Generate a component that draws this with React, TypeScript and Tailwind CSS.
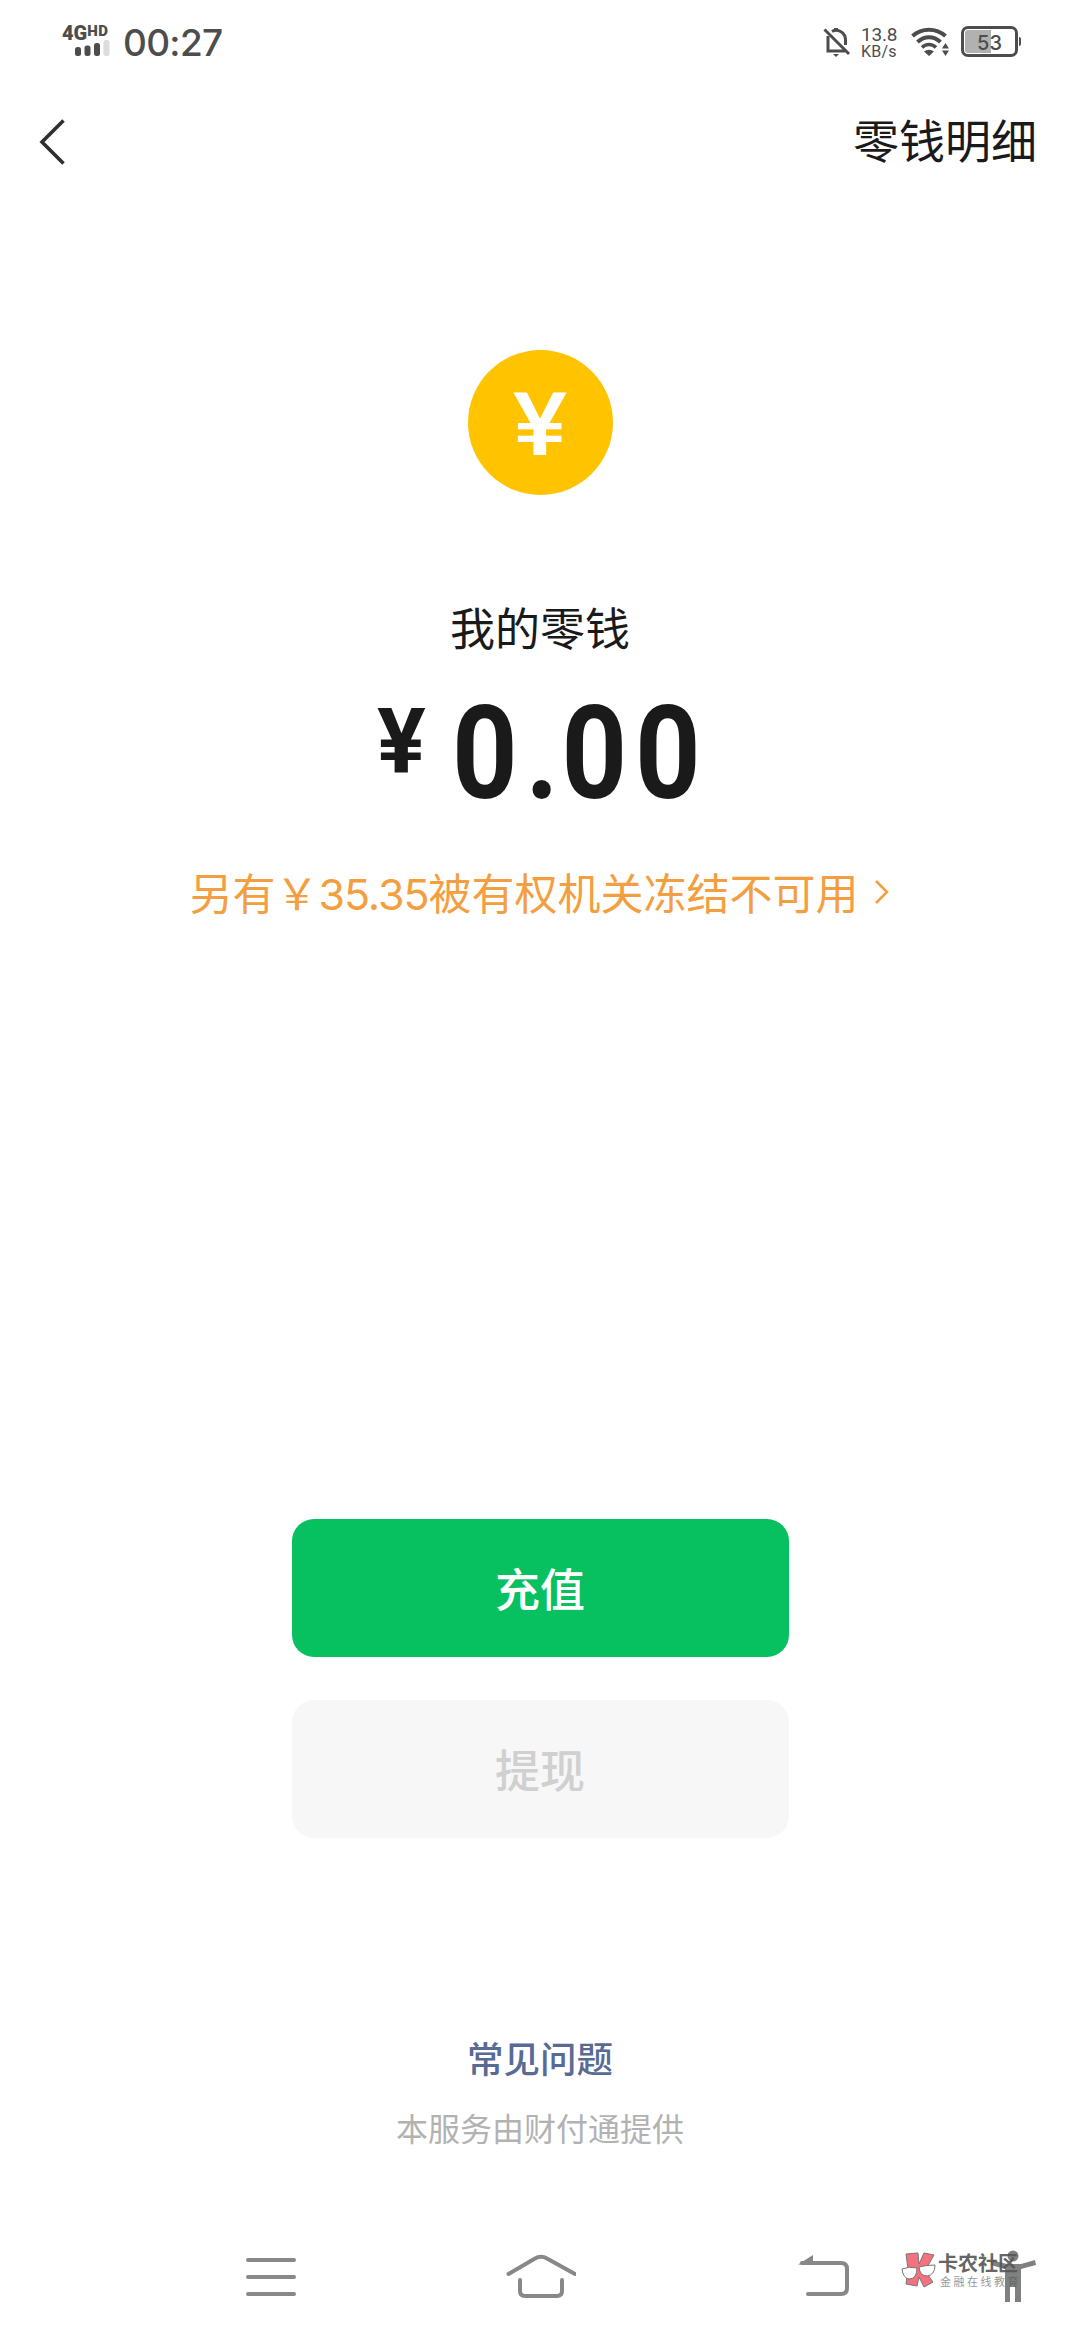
import type { ReactNode } from "react";

function StatusBar() {
  return (
    <div className="flex h-[84px] items-start justify-between pl-[62px] pr-[59px] font-[Roboto,'Noto_Sans_CJK_SC',sans-serif] text-[#4d4d4d]">
      <div className="flex">
        <div className="flex w-[61px] flex-col pt-[25px]">
          <div className="flex h-[15px] items-start font-black">
            <span className="text-[20px] leading-[17px]">4G</span>
            <span className="text-[15px] leading-[12px] tracking-[0.5px]">HD</span>
          </div>
          <svg className="ml-[12px] h-[18px] w-[38px]" viewBox="0 0 38 18" fill="currentColor">
            <rect x="1" y="7" width="6" height="9" rx="2.5" />
            <rect x="10.500" y="5.500" width="6" height="10.500" rx="2.500" />
            <rect x="20" y="3" width="6" height="13" rx="2.5" />
            <rect x="29.500" y="0" width="6" height="16" rx="2.500" fill="#dcdcdc" />
          </svg>
        </div>
        <span className="pt-[20px] font-[Inter,sans-serif] text-[37px] leading-[45px] font-medium tracking-[-0.7px]">
          00:27
        </span>
      </div>

      <div className="flex items-start pt-[26px]">
        <svg className="h-[32px] w-[28px]" viewBox="0 0 28 32" fill="none" stroke="currentColor" strokeWidth="3">
          <path d="M5 10V25H22" />
          <path d="M9 5.500C15 2 22.500 7 22.500 14V19" />
          <path d="M1.500 3.500L26 28" />
          <path d="M10 28H16L13 31Z" fill="currentColor" stroke="none" />
          <path d="M11 3.500H15" />
        </svg>
        <div className="ml-[10px] flex w-[36px] flex-col">
          <span className="text-[19px] leading-[17px] tracking-[-0.2px]">13.8</span>
          <span className="pt-[1px] text-[16px] leading-[15px] tracking-[0.2px]">KB/s</span>
        </div>
        <svg className="ml-[14px] h-[32px] w-[40px]" viewBox="0 0 40 32" fill="none" stroke="currentColor" strokeWidth="4">
          <path d="M1.500 10C11 1.500 25 1.500 34.500 10" />
          <path d="M6.500 16C13.500 9.500 22.500 9.500 29.500 16" />
          <path d="M11 21.500C15 17.500 21 17.500 25 21.500" strokeWidth="3.500" />
          <path d="M13 25.500Q18 22 23 25.500L18 30Z" fill="currentColor" stroke="none" />
          <path d="M34.500 17L38 22.500H31ZM34.500 30L38 24.500H31Z" fill="currentColor" stroke="none" />
        </svg>
        <div className="ml-[10px] flex items-center">
          <div className="relative flex h-[31px] w-[57px] items-center justify-center rounded-[7px] border-[3px] border-[#4d4d4d]">
            <div className="absolute top-[1px] left-[1px] h-[23px] w-[26px] rounded-l-[3px] bg-[#b1b1b1]" />
            <span className="relative top-px font-[Inter,sans-serif] text-[20px] leading-[22px] font-medium">53</span>
          </div>
          <div className="ml-px h-[9px] w-[2px] rounded-r-sm bg-[#4d4d4d]" />
        </div>
      </div>
    </div>
  );
}

function Header() {
  return (
    <header className="flex h-[115px] items-center justify-between pl-[38px] pr-[43px]">
      <svg className="h-[48px] w-[28px]" viewBox="0 0 28 48" fill="none" stroke="#2e2e2e" strokeWidth="3.600">
        <path d="M25.500 2.500L4 24L25.500 45.500" />
      </svg>
      <span className="pb-[7px] text-[46px] leading-[56px]">零钱明细</span>
    </header>
  );
}

function ActionButton({ children, disabled = false }: { children: ReactNode; disabled?: boolean }) {
  return (
    <button
      disabled={disabled}
      className={`flex h-[138px] w-[497px] items-center justify-center rounded-[22px] text-[45px] font-medium ${
        disabled ? "bg-[#f7f7f7] text-[#d0d0d0]" : "bg-[#07c160] text-white"
      }`}
    >
      {children}
    </button>
  );
}

function NavBar() {
  return (
    <nav className="flex h-[126px] items-center pl-[246px] text-[#888]">
      <svg className="h-[48px] w-[50px]" viewBox="0 0 50 48" fill="none" stroke="currentColor" strokeWidth="4" strokeLinecap="round">
        <path d="M2 7H48M2 24H48M2 41H48" />
      </svg>
      <svg className="ml-[210px] h-[48px] w-[70px]" viewBox="0 0 70 48" fill="none" stroke="currentColor" strokeWidth="4" strokeLinecap="round">
        <path d="M2.500 21L29 5.500Q35 2 41 5.500L69 21" />
        <path d="M14 27V38Q14 43 19 43H51Q56 43 56 38V27" />
      </svg>
      <svg className="ml-[222px] h-[48px] w-[52px]" viewBox="0 0 52 48" fill="none" stroke="currentColor" strokeWidth="4">
        <path d="M4 10H43Q49 10 49 16V35Q49 41 43 41H10" strokeLinecap="round" />
        <path d="M0 11.500L15 2V12Z" fill="currentColor" stroke="none" />
      </svg>
    </nav>
  );
}

function Watermark() {
  return (
    <div className="absolute top-[2248px] left-[900px] flex">
      <svg className="h-[44px] w-[38px]" viewBox="0 0 38 44" stroke="#777" strokeWidth="1">
        <path d="M6 6L18 5L19 16L24 5L34 7L25 23L33 34L24 39L19 29L17 38L6 36L8 21Z" fill="#f4717f" />
        <path d="M2 21Q9 18 17 20Q17 31 9 31Q3 30 2 21Z" fill="#fff" />
        <path d="M19 19Q27 17 35 17Q35 27 27 28Q20 28 19 19Z" fill="#fff" />
      </svg>
      <div className="flex flex-col pt-[4px]">
        <span className="text-[20px] leading-[22px] font-bold whitespace-nowrap text-[#666]">卡农社区</span>
        <span className="ml-[2px] text-[11px] leading-[15px] tracking-[2.500px] whitespace-nowrap text-[#999]">金融在线教育</span>
      </div>
      {/* accessibility shortcut figure floats over the end of the label */}
      <svg className="absolute top-[2px] left-[90px] h-[54px] w-[48px]" viewBox="0 0 48 54" fill="#555" fillOpacity="0.75">
        <circle cx="23" cy="6" r="5.500" />
        <path d="M1 10L17 14H31L45 10L46 15L31 19V52H25V37H20V52H15V19L1 15Z" />
      </svg>
    </div>
  );
}

export default function App() {
  return (
    <div className="relative flex h-[2340px] w-[1080px] flex-col overflow-hidden bg-white font-['Noto_Sans_CJK_SC',sans-serif] text-[#1a1a1a]">
      <StatusBar />
      <Header />

      <main className="flex flex-col items-center">
        <div className="mt-[151px] flex size-[145px] items-center justify-center rounded-full bg-[#ffc300]">
          <span className="scale-x-118 pt-[5px] font-[Roboto,sans-serif] text-[87px] leading-[140px] font-medium text-white">¥</span>
        </div>

        <p className="mt-[102px] text-[45px] leading-[60px]">我的零钱</p>

        <div className="mt-[31px] flex h-[130px] w-[326px] items-start font-[Roboto,sans-serif]">
          <span className="w-[75px] shrink-0 pt-[5px] text-[91px] leading-[98px] font-bold">¥</span>
          <span className="origin-left scale-x-88 text-[130px] leading-[132px] font-bold tracking-[9px] whitespace-nowrap">
            0<span className="tracking-[3px]">.</span>00
          </span>
        </div>

        <div className="mt-[46px] flex h-[60px] items-center text-[#f39f41]">
          <span className="font-[Roboto,'Noto_Sans_CJK_SC',sans-serif] text-[43px] leading-[60px]">
            另有￥<span className="font-[Inter,sans-serif] tracking-[-1.1px]">35.35</span>被有权机关冻结不可用
          </span>
          <svg className="mb-[5px] ml-[16px] h-[26px] w-[16px]" viewBox="0 0 16 26" fill="none" stroke="currentColor" strokeWidth="2.500">
            <path d="M2 2L13 13L2 24" />
          </svg>
        </div>

        <div className="mt-[595px] flex flex-col gap-[43px]">
          <ActionButton>充值</ActionButton>
          <ActionButton disabled>提现</ActionButton>
        </div>

        <a className="mt-[195px] text-[36.500px] leading-[50px] font-medium text-[#576b95]">常见问题</a>
        <p className="mt-[24px] text-[32px] leading-[40px] text-[#b2b2b2]">本服务由财付通提供</p>
      </main>

      <div className="mt-auto">
        <NavBar />
      </div>
      <Watermark />
    </div>
  );
}
